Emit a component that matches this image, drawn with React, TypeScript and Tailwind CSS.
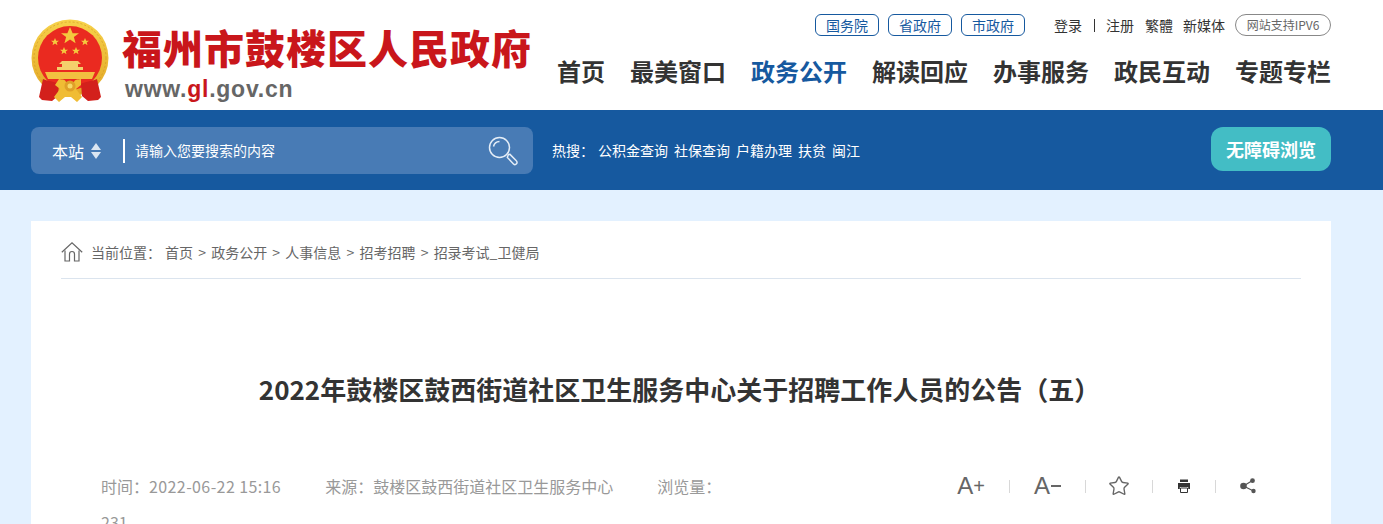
import { Star } from 'lucide-react'

const NAV = ['首页', '最美窗口', '政务公开', '解读回应', '办事服务', '政民互动', '专题专栏']
const GOV_LINKS = ['国务院', '省政府', '市政府']
const HOT = ['公积金查询', '社保查询', '户籍办理', '扶贫', '闽江']
const CRUMBS = ['首页', '政务公开', '人事信息', '招考招聘', '招录考试_卫健局']

const STAR = 'M0-1 .29-.31 1-.31 .43 .12 .62 .81 0 .4-.62 .81-.43 .12-1-.31-.29-.31z'

function Emblem() {
  return (
    <svg width="78" height="84" viewBox="0 0 78 84" className="shrink-0">
      <defs>
        <linearGradient id="gold" x1="0" y1="0" x2="0" y2="1">
          <stop offset="0" stopColor="#f7d24a" />
          <stop offset="1" stopColor="#e2a626" />
        </linearGradient>
      </defs>
      <circle cx="39" cy="39" r="38.5" fill="url(#gold)" />
      <circle cx="39" cy="39" r="36" fill="none" stroke="#cf9420" strokeWidth="0.6" strokeDasharray="2 2" />
      <circle cx="39" cy="39" r="32" fill="#ea2a20" />
      <path d={STAR} transform="translate(39 17) scale(9)" fill="#f4c93e" />
      <path d={STAR} transform="translate(24 23) scale(4)" fill="#f4c93e" />
      <path d={STAR} transform="translate(54 23) scale(4)" fill="#f4c93e" />
      <path d={STAR} transform="translate(33 32) scale(4)" fill="#f4c93e" />
      <path d={STAR} transform="translate(45 32) scale(4)" fill="#f4c93e" />
      <path d="M31 42h16l3 3h-3v3h5v3h-26v-3h5v-3h-3z" fill="#f4cf6c" />
      <path d="M14 53h50l-3 7H17z" fill="#f2c040" />
      <path d="M12 60c7 3 11 2 16 5l-1 12-6 5-10-1-3-3 2-9z" fill="#d3201c" />
      <path d="M66 60c-7 3-11 2-16 5l1 12 6 5 10-1 3-3-2-9z" fill="#d3201c" />
      <path d="M28 60c4 1 6 0 7 3h8c1-3 3-2 7-3v6l-5 4 6 8-5 5-6-5h-6l-6 5-5-5 6-8-5-4z" fill="#f0bc34" />
      <circle cx="39" cy="67" r="5.5" fill="#dfa028" />
      <circle cx="39" cy="67" r="2.5" fill="#f7d968" />
    </svg>
  )
}

function HomeIcon() {
  return (
    <svg width="22" height="20" viewBox="0 0 22 20" fill="none" stroke="#666" strokeWidth="1.2" className="shrink-0">
      <path d="M.8 10.2 11 .9l10.2 9.3" />
      <path d="M4 8.5V19h4.5v-7a2.5 2.5 0 0 1 5 0v7H18V8.5" />
    </svg>
  )
}

function SearchIcon() {
  return (
    <svg width="30" height="30" viewBox="0 0 30 30" fill="none" stroke="#e4edf7" strokeWidth="1.5">
      <circle cx="11.5" cy="11.5" r="10" />
      <path d="M5.5 10.5a6.5 6.5 0 0 1 6-5" />
      <path d="M20.4 18.6l1.6-.2 6.3 6.4a2 2 0 0 1-2.8 3.2l-6.2-6.6z" />
    </svg>
  )
}

function PrintIcon() {
  return (
    <svg width="14" height="14" viewBox="0 0 14 14" className="shrink-0">
      <path d="M3 .5h8v2.5H3z" fill="#333" />
      <path d="M1 4h12v6h-1.8V8H2.8v2H1z" fill="#333" />
      <path d="M3.5 9h7v4.5h-7z" fill="none" stroke="#333" strokeWidth="1" />
    </svg>
  )
}

function ShareIcon() {
  return (
    <svg width="16" height="16" viewBox="0 0 16 16" className="shrink-0">
      <path d="M3.5 8 12.5 2.5M3.5 8l10 5" stroke="#555" strokeWidth="1.2" />
      <circle cx="3.5" cy="8" r="3.3" fill="#555" />
      <circle cx="12.5" cy="2.7" r="2.4" fill="#555" />
      <circle cx="13.5" cy="13" r="2.2" fill="#555" />
    </svg>
  )
}

function Sep() {
  return <span className="w-px h-[13px] bg-[#d8d8d8]" />
}

export default function App() {
  return (
    <div className="h-[524px] overflow-hidden bg-[#e3f1ff] font-['Noto_Sans_CJK_SC','Liberation_Sans',sans-serif]">
      {/* 顶部 */}
      <header className="h-[110px] bg-white">
        <div className="w-[1300px] ml-[31px] flex justify-between">
          <div className="flex pt-[19px] gap-[13px]">
            <Emblem />
            <div>
              <div className="text-[40px] leading-[56px] font-black text-[#c9161b] tracking-[1px] whitespace-nowrap">福州市鼓楼区人民政府</div>
              <div className="font-['Liberation_Sans',sans-serif] text-[23px] leading-[28px] font-bold text-[#666] tracking-[0.75px] ml-[3px]">
                www.<span className="text-[#c9161b]">gl</span>.gov.cn
              </div>
            </div>
          </div>
          <div className="flex flex-col items-end pt-[14px]">
            <div className="flex items-center h-[22px]">
              <div className="flex gap-[9px] mr-[29px]">
                {GOV_LINKS.map((t) => (
                  <a key={t} className="w-[64px] h-[22px] rounded-md border border-[#16599f] text-[#16599f] text-[14px] leading-[20px] text-center">{t}</a>
                ))}
              </div>
              <div className="flex items-center text-[14px] leading-[20px] text-[#333] whitespace-nowrap">
                <span>登录</span>
                <span className="w-px h-[13px] bg-[#333] ml-[12px] mr-[11px]" />
                <span>注册</span>
                <span className="ml-[11px]">繁體</span>
                <span className="ml-[10px]">新媒体</span>
              </div>
              <span className="ml-[10px] w-[96px] h-[22px] rounded-full border border-[#888] text-[#666] text-[12px] leading-[20px] text-center whitespace-nowrap">网站支持IPV6</span>
            </div>
            <nav className="flex gap-[25px] mt-[17px]">
              {NAV.map((t) => (
                <a key={t} className={`text-[24px] leading-[36px] font-bold whitespace-nowrap ${t === '政务公开' ? 'text-[#16599f]' : 'text-[#333]'}`}>{t}</a>
              ))}
            </nav>
          </div>
        </div>
      </header>

      {/* 搜索栏 */}
      <div className="h-[80px] bg-[#16599f]">
        <div className="w-[1300px] ml-[31px] flex items-start pt-[17px]">
          <div className="w-[502px] h-[47px] rounded-lg bg-[#487bb5] flex items-center pl-[21px] pr-[15px]">
            <span className="text-[16px] text-white">本站</span>
            <span className="flex flex-col gap-[2px] ml-[7px]">
              <span className="w-0 h-0 border-x-[5px] border-x-transparent border-b-[7px] border-b-[#dbe6f2]" />
              <span className="w-0 h-0 border-x-[5px] border-x-transparent border-t-[7px] border-t-[#dbe6f2]" />
            </span>
            <span className="w-[2px] h-[24px] bg-white ml-[22px]" />
            <span className="text-[14px] text-white ml-[10px]">请输入您要搜索的内容</span>
            <span className="ml-auto flex"><SearchIcon /></span>
          </div>
          <div className="flex items-center h-[47px] ml-[19px] text-[14px] text-white whitespace-nowrap">
            <span className="mr-[4px]">热搜：</span>
            <div className="flex gap-[6px]">
              {HOT.map((t) => <a key={t}>{t}</a>)}
            </div>
          </div>
          <a className="ml-auto w-[120px] h-[44px] rounded-xl bg-[#43bdc5] text-white text-[18px] font-bold leading-[44px] text-center">无障碍浏览</a>
        </div>
      </div>

      {/* 正文 */}
      <main className="w-[1300px] h-[400px] ml-[31px] mt-[31px] bg-white px-[30px]">
        <div className="h-[58px] flex items-center pt-[5px] border-b border-[#dbe4ee] text-[14px] text-[#666] whitespace-nowrap">
          <HomeIcon />
          <span className="ml-[8px] mr-[4px]">当前位置：</span>
          {CRUMBS.map((t, i) => (
            <span key={t}>
              {i > 0 && <span className="mx-[5.2px]">&gt;</span>}
              {t}
            </span>
          ))}
        </div>
        <h1 className="mt-[90px] text-[26px] leading-[40px] font-bold text-[#333] text-center whitespace-nowrap pr-[3px]">2022年鼓楼区鼓西街道社区卫生服务中心关于招聘工作人员的公告（五）</h1>
        <div className="mt-[59px] px-[40px] flex justify-between items-start">
          <div className="w-[640px] text-[16px] leading-[36px] text-[#999]">
            <span className="mr-[44px]">时间：<span className="tracking-[0.4px]">2022-06-22 15:16</span></span>
            <span className="mr-[44px]">来源：鼓楼区鼓西街道社区卫生服务中心</span>
            <span>浏览量：</span> <span>231</span>
          </div>
          <div className="flex items-center h-[36px] gap-[24px] pr-[5px] text-[#666] font-['Liberation_Sans',sans-serif]">
            <span className="text-[24px] leading-none flex items-center">A<span className="text-[20px]">+</span></span>
            <Sep />
            <span className="text-[24px] leading-none flex items-center">A<span className="w-[10px] h-[2px] bg-[#666] ml-[1px]" /></span>
            <Sep />
            <span className="w-[18px] flex justify-center overflow-visible"><Star size={22} strokeWidth={1.5} className="shrink-0" /></span>
            <Sep />
            <PrintIcon />
            <Sep />
            <ShareIcon />
          </div>
        </div>
      </main>
    </div>
  )
}
